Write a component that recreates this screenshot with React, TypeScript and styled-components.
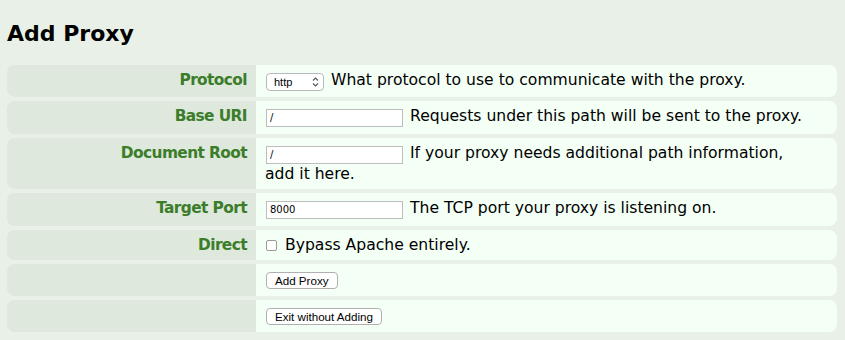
import React from "react";
import styled, { createGlobalStyle } from "styled-components";

const Global = createGlobalStyle`
  html, body { margin: 0; padding: 0; background: #e8f0e8; }
  body { font-family: "DejaVu Sans", Verdana, sans-serif; color: #000; }
`;

const Page = styled.div`
  padding: 19px 8px 0 7px;
  width: 830px;
`;

const Title = styled.h1`
  margin: 0 0 16px 0;
  font-size: 22px;
  font-weight: bold;
  line-height: 30px;
`;

const Form = styled.div`
  display: flex;
  flex-direction: column;
  gap: 4px;
`;

const Row = styled.div<{ $h: number }>`
  display: flex;
  min-height: ${(p) => p.$h}px;
`;

const Label = styled.div`
  flex: 0 0 249px;
  box-sizing: border-box;
  background: #dee8dc;
  border-radius: 8px 0 0 8px;
  color: #3b7d2a;
  font-weight: bold;
  font-size: 15.4px;
  letter-spacing: -0.6px;
  text-align: right;
  padding: 5px 9px 0 0;
  line-height: 21px;
`;

const Value = styled.div`
  flex: 1;
  box-sizing: border-box;
  background: #f4fff6;
  border-radius: 0 8px 8px 0;
  font-size: 15.6px;
  line-height: 21px;
  padding: 5px 30px 0 9px;
`;

const TextInput = styled.input`
  box-sizing: border-box;
  width: 137px;
  height: 18px;
  border: 1px solid #bdbdbd;
  padding: 0 3px;
  font-family: "DejaVu Sans", sans-serif;
  font-size: 10px;
  vertical-align: 0px;
  margin: 0 7px 0 1px;
  background: #fff;
  outline: none;
`;

const SelectWrap = styled.span`
  position: relative;
  display: inline-block;
  vertical-align: -1px;
  margin: 0 7px 0 1px;
`;

const Select = styled.select`
  appearance: none;
  -webkit-appearance: none;
  box-sizing: border-box;
  width: 58px;
  height: 18px;
  border: 1px solid #b9b9b9;
  border-radius: 4px;
  background: #fff;
  font-family: "Liberation Sans", sans-serif;
  font-size: 11px;
  padding: 0 0 0 7px;
  color: #000;
  display: block;
`;

const Chevron = styled.svg`
  position: absolute;
  right: 5px;
  top: 4px;
  pointer-events: none;
`;

const Check = styled.span`
  display: inline-block;
  box-sizing: border-box;
  width: 11px;
  height: 11px;
  border: 1px solid #9a9a9a;
  border-radius: 2px;
  background: #fff;
  margin: 0 8px 0 1px;
  vertical-align: -1px;
`;

const Button = styled.button`
  box-sizing: border-box;
  height: 17px;
  border: 1px solid #b0b0b0;
  border-radius: 4px;
  background: #fff;
  font-family: "Liberation Sans", sans-serif;
  font-size: 11.6px;
  padding: 0 8px;
  margin: 3px 0 0 1px;
  color: #000;
  line-height: 15px;
  vertical-align: top;
`;

export default function App() {
  return (
    <>
      <Global />
      <Page>
        <Title>Add Proxy</Title>
        <Form>
          <Row $h={32}>
            <Label>Protocol</Label>
            <Value>
              <SelectWrap>
                <Select defaultValue="http">
                  <option value="http">http</option>
                  <option value="https">https</option>
                </Select>
                <Chevron width="7" height="10" viewBox="0 0 7 10">
                  <path d="M1 3.5 L3.5 1 L6 3.5 M1 6.5 L3.5 9 L6 6.5" fill="none" stroke="#555" strokeWidth="1.1" />
                </Chevron>
              </SelectWrap>
              What protocol to use to communicate with the proxy.
            </Value>
          </Row>
          <Row $h={33}>
            <Label>Base URI</Label>
            <Value>
              <TextInput defaultValue="/" />
              Requests under this path will be sent to the proxy.
            </Value>
          </Row>
          <Row $h={51}>
            <Label>Document Root</Label>
            <Value>
              <TextInput defaultValue="/" />
              If your proxy needs additional path information, add it here.
            </Value>
          </Row>
          <Row $h={33}>
            <Label>Target Port</Label>
            <Value>
              <TextInput defaultValue="8000" />
              The TCP port your proxy is listening on.
            </Value>
          </Row>
          <Row $h={30}>
            <Label>Direct</Label>
            <Value>
              <Check />
              Bypass Apache entirely.
            </Value>
          </Row>
          <Row $h={32}>
            <Label />
            <Value>
              <Button>Add Proxy</Button>
            </Value>
          </Row>
          <Row $h={32}>
            <Label />
            <Value>
              <Button>Exit without Adding</Button>
            </Value>
          </Row>
        </Form>
      </Page>
    </>
  );
}
